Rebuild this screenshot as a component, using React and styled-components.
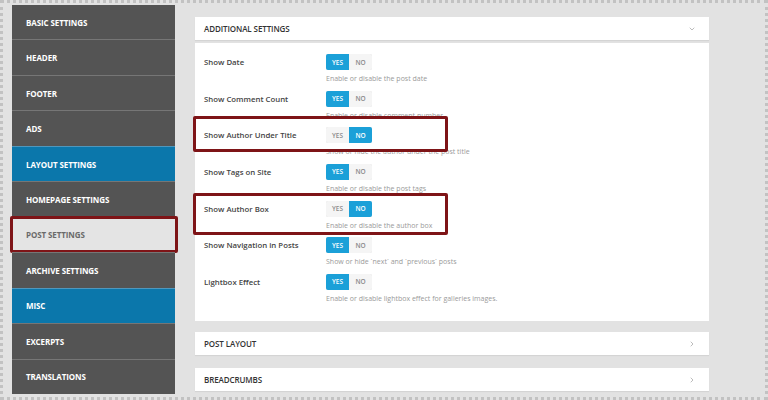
import React from 'react'
import styled, { createGlobalStyle } from 'styled-components'
import { ChevronDown, ChevronRight } from 'lucide-react'

const GlobalStyle = createGlobalStyle`
  html, body { margin: 0; padding: 0; }
  body { font-family: "Open Sans", "Liberation Sans", sans-serif; background: #fff; }
`

const Page = styled.div`
  box-sizing: border-box;
  width: 768px;
  height: 400px;
  border: 3px dotted #c2c2c2;
  background: #e2e2e2;
  display: flex;
  align-items: flex-start;
  padding: 2px 0 0 9px;
`

const Sidebar = styled.nav`
  width: 163px;
  height: 389px;
  display: flex;
  flex-direction: column;
  background: #535353;
`

const NavItem = styled.div`
  position: relative;
  flex: 1;
  display: flex;
  align-items: center;
  padding-left: 14px;
  font-size: 8px;
  font-weight: 700;
  letter-spacing: -0.1px;
  text-transform: uppercase;
  color: ${({ current }) => (current ? '#6a6a6a' : '#fff')};
  background: ${({ blue, current }) => (blue ? '#0b77ab' : current ? '#e4e4e4' : '#545454')};
  border-top: 1px solid ${({ blue }) => (blue ? '#4f97bd' : '#767676')};
  &:first-child { border-top: none; }
`

const Highlight = styled.div`
  position: absolute;
  box-sizing: border-box;
  border: 3px solid #7e1417;
  border-radius: 2px;
  pointer-events: none;
`

const NavHighlight = styled(Highlight)`
  left: -2px;
  right: -3px;
  top: -2px;
  bottom: -1px;
`

const RowHighlight = styled(Highlight)`
  left: -11px;
  width: 255px;
  top: ${({ top }) => top}px;
  height: ${({ h }) => h}px;
`

const Main = styled.main`
  width: 514px;
  margin-left: 20px;
  padding-top: 12px;
  display: flex;
  flex-direction: column;
`

const Bar = styled.div`
  height: 23px;
  background: #fff;
  display: flex;
  align-items: center;
  justify-content: space-between;
  padding: 0 13px 0 9px;
  margin-top: ${({ gap }) => gap || 0}px;
  box-shadow: 0 1px 1px rgba(0, 0, 0, 0.06);
  color: #9a9a9a;
`

const BarTitle = styled.span`
  font-size: 8px;
  font-weight: 600;
  color: #333;
  text-transform: uppercase;
  letter-spacing: -0.1px;
`

const Card = styled.section`
  box-sizing: border-box;
  height: 278px;
  margin-top: 3px;
  background: #fff;
  padding: 11px 9px 0;
`

const Row = styled.div`
  position: relative;
  display: grid;
  grid-template-columns: 122px 1fr;
  align-items: start;
  height: 36.67px;
`

const Label = styled.div`
  height: 16px;
  line-height: 16px;
  font-size: 7.8px;
  font-weight: 600;
  color: #444;
`

const Field = styled.div`
  display: flex;
  flex-direction: column;
  align-items: flex-start;
`

const Toggle = styled.div`
  display: flex;
  width: 46px;
  height: 16px;
  border-radius: 2px;
  overflow: hidden;
  box-shadow: inset 0 0 0 1px #d4d4d4;
`

const Option = styled.span`
  flex: 1;
  display: flex;
  align-items: center;
  justify-content: center;
  font-size: 6.5px;
  font-weight: 600;
  color: ${({ on }) => (on ? '#fff' : '#8a8a8a')};
  background: ${({ on }) => (on ? '#1ba0d8' : '#f5f5f5')};
`

const Desc = styled.div`
  margin-top: 4px;
  font-size: 7px;
  line-height: 10px;
  color: #9a9a9a;
  white-space: nowrap;
`

const navItems = [
  { label: 'Basic Settings' },
  { label: 'Header' },
  { label: 'Footer' },
  { label: 'Ads' },
  { label: 'Layout Settings', blue: true },
  { label: 'Homepage Settings' },
  { label: 'Post Settings', current: true },
  { label: 'Archive Settings' },
  { label: 'Misc', blue: true },
  { label: 'Excerpts' },
  { label: 'Translations' },
]

const settings = [
  { label: 'Show Date', on: true, desc: 'Enable or disable the post date' },
  { label: 'Show Comment Count', on: true, desc: 'Enable or disable comment number' },
  { label: 'Show Author Under Title', on: false, desc: 'Show or hide the author under the post title', mark: { top: -11, h: 36 } },
  { label: 'Show Tags on Site', on: true, desc: 'Enable or disable the post tags' },
  { label: 'Show Author Box', on: false, desc: 'Enable or disable the author box', mark: { top: -8, h: 42 } },
  { label: 'Show Navigation in Posts', on: true, desc: 'Show or hide `next` and `previous` posts' },
  { label: 'Lightbox Effect', on: true, desc: 'Enable or disable lightbox effect for galleries images.' },
]

export default function App() {
  return (
    <>
      <GlobalStyle />
      <Page>
        <Sidebar>
          {navItems.map((item) => (
            <NavItem key={item.label} blue={item.blue} current={item.current}>
              {item.label}
              {item.current && <NavHighlight />}
            </NavItem>
          ))}
        </Sidebar>
        <Main>
          <Bar>
            <BarTitle>Additional Settings</BarTitle>
            <ChevronDown size={8} strokeWidth={2} />
          </Bar>
          <Card>
            {settings.map((s) => (
              <Row key={s.label}>
                <Label>{s.label}</Label>
                <Field>
                  <Toggle>
                    <Option on={s.on}>YES</Option>
                    <Option on={!s.on}>NO</Option>
                  </Toggle>
                  <Desc>{s.desc}</Desc>
                </Field>
                {s.mark && <RowHighlight top={s.mark.top} h={s.mark.h} />}
              </Row>
            ))}
          </Card>
          <Bar gap={11}>
            <BarTitle>Post Layout</BarTitle>
            <ChevronRight size={8} strokeWidth={2} />
          </Bar>
          <Bar gap={13}>
            <BarTitle>Breadcrumbs</BarTitle>
            <ChevronRight size={8} strokeWidth={2} />
          </Bar>
        </Main>
      </Page>
    </>
  )
}
